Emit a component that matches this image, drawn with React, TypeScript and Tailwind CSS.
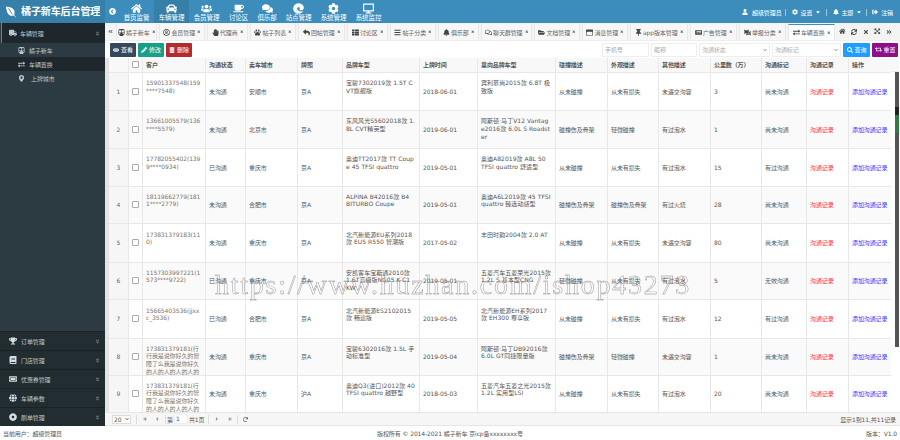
import type { ReactNode } from "react";
import {
  FaAngleDoubleDown,
  FaAngleDoubleLeft,
  FaAngleDoubleRight,
  FaAngleDoubleUp,
  FaBars,
  FaBell,
  FaBook,
  FaCaretDown,
  FaCaretLeft,
  FaCaretRight,
  FaChevronCircleLeft,
  FaChevronDown,
  FaCoffee,
  FaCog,
  FaComments,
  FaDotCircle,
  FaEdge,
  FaDesktop,
  FaEnvira,
  FaExchangeAlt,
  FaExpandArrowsAlt,
  FaEye,
  FaFolderOpen,
  FaGlobe,
  FaHandPaper,
  FaHome,
  FaMapMarkerAlt,
  FaNewspaper,
  FaObjectUngroup,
  FaPaw,
  FaPencilAlt,
  FaRedo,
  FaRegComments,
  FaRegUserCircle,
  FaRegWindowMaximize,
  FaReply,
  FaRetweet,
  FaSearch,
  FaSignOutAlt,
  FaStepBackward,
  FaStepForward,
  FaSubway,
  FaSync,
  FaThList,
  FaThumbtack,
  FaTicketAlt,
  FaTimes,
  FaTrashAlt,
  FaTrophy,
  FaTruck,
  FaUser,
  FaUsers,
  FaCar,
} from "react-icons/fa";

const navItems = [
  { label: "首页监管", icon: <FaHome size={11} />, width: "w-[35px]" },
  { label: "车辆管理", icon: <FaCar size={11} />, width: "w-[35px]", active: true },
  { label: "会员管理", icon: <FaUsers size={11} />, width: "w-[35px]" },
  { label: "讨论区", icon: <FaCoffee size={11} />, width: "w-[29px]" },
  { label: "俱乐部", icon: <FaComments size={11} />, width: "w-[28px]" },
  { label: "站点管理", icon: <FaEdge size={11} />, width: "w-[35px]" },
  { label: "系统管理", icon: <FaCog size={11} />, width: "w-[35px]" },
  { label: "系统监控", icon: <FaDesktop size={11} />, width: "w-[35px]" },
];

const tabs = [
  { label: "橘子新车", icon: <FaSubway />, width: "w-[41px]" },
  { label: "会员管理", icon: <FaRegUserCircle />, width: "w-[46px]" },
  { label: "代理商", icon: <FaHandPaper />, width: "w-[41px]" },
  { label: "帖子列表", icon: <FaPaw />, width: "w-[46px]" },
  { label: "回帖管理", icon: <FaReply />, width: "w-[47px]" },
  { label: "讨论区", icon: <FaThList />, width: "w-[41px]" },
  { label: "帖子分类", icon: <FaBars />, width: "w-[46px]" },
  { label: "俱乐部", icon: <FaBell />, width: "w-[41px]" },
  { label: "聊天群管理", icon: <FaRegComments />, width: "w-[51px]" },
  { label: "文档管理", icon: <FaFolderOpen />, width: "w-[46px]" },
  { label: "消息管理", icon: <FaRegWindowMaximize />, width: "w-[46px]" },
  { label: "app版本管理", icon: <FaThumbtack />, width: "w-[58px]" },
  { label: "广告管理", icon: <FaNewspaper />, width: "w-[47px]" },
  { label: "举报分类", icon: <FaObjectUngroup />, width: "w-[47px]" },
  { label: "车辆置换", icon: <FaExchangeAlt />, width: "w-[47px]", active: true },
];

const bottomMenus = [
  { label: "订单管理", icon: <FaTrophy /> },
  { label: "门店管理", icon: <FaBook /> },
  { label: "优惠券管理", icon: <FaTicketAlt /> },
  { label: "车辆参数", icon: <FaGlobe /> },
  { label: "刷单管理", icon: <FaDotCircle /> },
];

const columns = [
  { label: "", width: "w-[19px]" },
  { label: "", width: "w-[14px]" },
  { label: "客户", width: "w-[63px]" },
  { label: "沟通状态", width: "w-[40px]" },
  { label: "卖车城市", width: "w-[52px]" },
  { label: "牌照", width: "w-[45px]" },
  { label: "品牌车型", width: "w-[77px]" },
  { label: "上牌时间", width: "w-[58px]" },
  { label: "意向品牌车型", width: "w-[78px]" },
  { label: "碰撞描述", width: "w-[52px]" },
  { label: "外观描述", width: "w-[51px]" },
  { label: "其他描述", width: "w-[52px]" },
  { label: "公里数（万）", width: "w-[51px]" },
  { label: "沟通标记", width: "w-[45px]" },
  { label: "沟通记录", width: "w-[42px]" },
  { label: "操作", width: "w-[43px]" },
];

const longName = "173831379181(行行我是说你好久的智障了么我是说你好久的人的人的人的人的";

const rows = [
  { h: "h-[38px]", customer: "15901337548(159****7548)", status: "未沟通", city: "安顺市", plate: "京A", car: "宝骏7302019款 1.5T CVT旗舰版", date: "2018-06-01", want: "宾利慕尚2015款 6.8T 极致版", crash: "从未碰撞", look: "从未有损失", other: "未遇交沟容", km: "3", mark: "尚未沟通" },
  { h: "h-[38px]", customer: "13661005579(136****5579)", status: "未沟通", city: "北京市", plate: "京A", car: "东风风光S5602018款 1.8L CVT精英型", date: "2019-06-01", want: "阿斯顿·马丁V12 Vantage2016款 6.0L S Roadster", crash: "碰撞伤及骨架", look: "轻微碰撞", other: "有过泡水", km: "1", mark: "尚未沟通" },
  { h: "h-[38px]", customer: "17782055402(1399****0934)", status: "已沟通", city: "重庆市", plate: "京A", car: "奥迪TT2017款 TT Coupe 45 TFSI quattro", date: "2019-05-01", want: "奥迪A82019款 A8L 50 TFSI quattro 舒适型", crash: "从未碰撞", look: "从未有损失", other: "有过泡水", km: "15", mark: "有过沟通" },
  { h: "h-[37px]", customer: "18119662779(1811****2779)", status: "未沟通", city: "合肥市", plate: "京A", car: "ALPINA B42016款 B4 BITURBO Coupe", date: "2019-05-01", want: "奥迪A6L2019款 45 TFSI quattro 臻选动感型", crash: "碰撞伤及骨架", look: "碰撞伤及骨架", other: "有过火烧", km: "28", mark: "尚未沟通" },
  { h: "h-[39px]", customer: "173831379183(110)", status: "未沟通", city: "重庆市", plate: "京A", car: "北汽新能源EU系列2018款 EU5 R550 智潮版", date: "2017-05-02", want: "丰田时韵2004款 2.0 AT", crash: "从未碰撞", look: "从未有损失", other: "未遇交沟容", km: "80", mark: "尚未沟通" },
  { h: "h-[37px]", customer: "1157303997221(1573****9722)", status: "已沟通", city: "重庆市", plate: "京A", car: "安凯客车宝斯通2010款 1.6T高级版NG05 K-C1 KW", date: "2019-05-01", want: "五菱汽车五菱荣光2015款 1.2L S 基本型CNG", crash: "轻微碰撞", look: "从未有损失", other: "有过泡水", km: "5", mark: "无效沟通" },
  { h: "h-[39px]", customer: "15665403536(jjxxc_3536)", status: "已沟通", city: "合肥市", plate: "京A", car: "北汽新能源ES2102015款 畅途版", date: "2019-05-05", want: "北汽新能源EH系列2017款 EH300 尊享版", crash: "从未碰撞", look: "从未有损失", other: "有过泡水", km: "12", mark: "有过沟通" },
  { h: "h-[37px]", customer: longName, status: "未沟通", city: "重庆市", plate: "京A", car: "宝骏6302016款 1.5L 手动标准型", date: "2019-05-04", want: "阿斯顿·马丁DB92016款 6.0L GT同捷限量版", crash: "碰撞伤及骨架", look: "轻微碰撞", other: "未遇交沟容", km: "1", mark: "尚未沟通" },
  { h: "h-[37px]", customer: longName, status: "未沟通", city: "重庆市", plate: "沪A", car: "奥迪Q3(进口)2012款 40 TFSI quattro 越野型", date: "2018-05-03", want: "五菱汽车五菱之光2015款 1.2L 实用型LSI", crash: "从未碰撞", look: "从未有损失", other: "有过泡水", km: "20", mark: "尚未沟通" },
];

const Cell = ({ children, className = "" }: { children: ReactNode; className?: string }) => (
  <td className={`border-r border-b border-[#e8e8e8] px-[3.5px] py-0 align-middle overflow-hidden ${className}`}>
    {children}
  </td>
);

const Block = ({ children, className = "" }: { children: ReactNode; className?: string }) => (
  <div className={`h-[24px] leading-[7.8px] break-all ${className}`}>{children}</div>
);

const Check = () => <div className="mx-auto size-[7px] rounded-[1px] border border-[#aaa] bg-white" />;

const Sep = ({ className }: { className: string }) => <span className={`w-px h-[7px] bg-[#9cc6de] ${className}`} />;

const ToolButton = ({ icon, label, className }: { icon: ReactNode; label: string; className: string }) => (
  <button className={`h-[14px] flex items-center justify-center gap-[2px] rounded-[1px] text-white ${className}`}>
    {icon}
    <span>{label}</span>
  </button>
);

const Field = ({ text, width, select }: { text: string; width: string; select?: boolean }) => (
  <div className={`h-[14px] flex items-center justify-between bg-white px-[2px] text-[#aaa] border border-[#eee] ${width}`}>
    <span>{text}</span>
    {select && <FaChevronDown className="text-[4px] text-[#888]" />}
  </div>
);

export default function App() {
  return (
    <div className="relative w-[900px] h-[440px] overflow-hidden flex flex-col bg-white text-[6px] tracking-[-0.1px] text-[#555] font-['DejaVu_Sans','Noto_Sans_CJK_SC',sans-serif]">
      {/* header */}
      <div className="h-[23px] flex shrink-0 bg-[#3c8dbc] text-white">
        <div className="w-[105px] flex items-center gap-[4px] pl-[5px] bg-[#367fa9]">
          <FaEnvira size={12} />
          <span className="text-[10px] font-bold leading-none whitespace-nowrap">橘子新车后台管理</span>
        </div>
        <div className="w-[14px] flex items-center justify-center">
          <FaChevronCircleLeft size={7} />
        </div>
        <div className="flex">
          {navItems.map((item) => (
            <div
              key={item.label}
              className={`${item.width} flex flex-col items-center pt-[3px] text-[6.5px] leading-none ${item.active ? "bg-[#367fa9]" : ""}`}
            >
              {item.icon}
              <span className="mt-[1px] whitespace-nowrap">{item.label}</span>
            </div>
          ))}
        </div>
        <div className="ml-auto flex items-center pr-[7px] pt-[1px] whitespace-nowrap">
          <FaUser size={6} />
          <span className="ml-[4px]">超级管理员</span>
          <Sep className="ml-[3px]" />
          <FaCog size={6} className="ml-[6px]" />
          <span className="ml-[3px]">设置</span>
          <FaCaretDown size={6} className="ml-[3px]" />
          <Sep className="ml-[5px]" />
          <FaBell size={6} className="ml-[6px]" />
          <span className="ml-[2px]">主题</span>
          <FaCaretDown size={6} className="ml-[3px]" />
          <Sep className="ml-[4px]" />
          <FaSignOutAlt size={6} className="ml-[5px]" />
          <span className="ml-[3px]">注销</span>
        </div>
      </div>

      <div className="flex flex-1 min-h-0">
        {/* sidebar */}
        <div className="w-[105px] shrink-0 flex flex-col bg-[#2c3b41] text-[#b8c7ce]">
          <div className="h-[20px] flex items-center bg-[#1e282c] border-l border-[#3c8dbc] ml-px pl-[7px] pr-[5px] gap-[3px]">
            <FaTruck size={8} />
            <span>车辆管理</span>
            <FaAngleDoubleUp size={5} className="ml-auto text-[#777]" />
          </div>
          <div className="h-[14px] flex items-center pl-[18px] gap-[4px]">
            <FaSubway size={7} />
            <span>橘子新车</span>
          </div>
          <div className="h-[14px] flex items-center pl-[18px] gap-[4px] bg-[#1e282c]">
            <FaExchangeAlt size={7} />
            <span>车辆置换</span>
          </div>
          <div className="h-[14px] flex items-center pl-[18px] gap-[6px]">
            <FaMapMarkerAlt size={7} />
            <span>上牌城市</span>
          </div>
          <div className="mt-auto flex flex-col bg-[#222d32]">
            {bottomMenus.map((menu) => (
              <div key={menu.label} className="h-[19px] flex items-center gap-[4px] pl-[9px] pr-[5px] border-t border-[#1a2226]">
                <span className="text-[8px] text-[#d5dde0]">{menu.icon}</span>
                <span>{menu.label}</span>
                <FaAngleDoubleDown size={5} className="ml-auto text-[#777]" />
              </div>
            ))}
          </div>
        </div>

        {/* main */}
        <div className="flex-1 min-w-0 flex flex-col">
          {/* tabs */}
          <div className="h-[18px] shrink-0 flex items-end bg-[#f4f4f4] border-b border-[#eee]">
            <div className="w-[11px] h-full flex items-center justify-center text-[#666]">
              <FaAngleDoubleLeft size={5} />
            </div>
            <div className="flex gap-[2px]">
              {tabs.map((tab) => (
                <div
                  key={tab.label}
                  className={`${tab.width} h-[16px] flex items-center justify-center gap-[1px] whitespace-nowrap border-x border-[#e8e8e8] text-[#666] ${
                    tab.active ? "bg-white border-t border-t-[#3c8dbc]" : "bg-[#f7f7f7]"
                  }`}
                >
                  <span className="text-[7px] text-[#444]">{tab.icon}</span>
                  <span>{tab.label}</span>
                  <FaTimes className="ml-[1px] text-[3.5px] text-[#555]" />
                </div>
              ))}
            </div>
            <div className="flex-1 h-full flex items-center gap-[5.5px] pl-[4px] text-[#444]">
              <FaHome size={6.5} />
              <FaSync size={6} />
              <FaTimes size={6} />
              <FaExpandArrowsAlt size={6.5} />
              <FaAngleDoubleRight size={6} />
            </div>
          </div>

          {/* toolbar */}
          <div className="h-[17px] shrink-0 flex items-center pl-[5px] pr-[2px] gap-[2px]">
            <ToolButton icon={<FaEye size={6} />} label="查看" className="w-[26px] bg-[#34495e]" />
            <ToolButton icon={<FaPencilAlt size={6} />} label="修改" className="w-[26px] bg-[#16a085]" />
            <ToolButton icon={<FaTrashAlt size={6} />} label="删除" className="w-[26px] bg-[#b52a2f]" />
            <div className="ml-auto flex items-center gap-[2px]">
              <Field text="手机号" width="w-[47px]" />
              <Field text="昵称" width="w-[46px]" />
              <Field text="沟通状态" width="w-[71px]" select />
              <Field text="沟通标记" width="w-[69px]" select />
              <ToolButton icon={<FaSearch size={6} />} label="查询" className="w-[27px] bg-[#1e9fff]" />
              <ToolButton icon={<FaRetweet size={7} />} label="重置" className="w-[26px] bg-[#8e0e8e]" />
            </div>
          </div>

          {/* table */}
          <div className="flex-1 min-h-0 flex bg-white overflow-hidden">
            <div className="w-[4px] shrink-0 bg-[#e4e4e4]" />
            <div className="w-[782px] shrink-0 overflow-hidden">
              <table className="w-[782px] table-fixed border-collapse">
                <colgroup>
                  {columns.map((col, i) => (
                    <col key={i} className={col.width} />
                  ))}
                </colgroup>
                <thead>
                  <tr className="h-[14px] bg-[#f8f8f8]">
                    {columns.map((col, i) => (
                      <th
                        key={i}
                        className="border-r border-b border-[#e8e8e8] px-[3.5px] py-0 text-left font-bold text-[#555] whitespace-nowrap overflow-hidden"
                      >
                        {i === 1 ? <Check /> : col.label}
                      </th>
                    ))}
                  </tr>
                </thead>
                <tbody>
                  {rows.map((row, i) => (
                    <tr key={i} className={`${row.h} ${i % 2 === 1 ? "bg-[#fafafa]" : "bg-white"}`}>
                      <Cell className="bg-[#f6f6f6] text-center text-[#666]">{i + 1}</Cell>
                      <Cell className="px-0">
                        <Check />
                      </Cell>
                      <Cell className="text-[#7d766a]">
                        <Block>{row.customer}</Block>
                      </Cell>
                      <Cell>{row.status}</Cell>
                      <Cell>{row.city}</Cell>
                      <Cell>{row.plate}</Cell>
                      <Cell>
                        <Block className="tracking-[0.05px]">{row.car}</Block>
                      </Cell>
                      <Cell>{row.date}</Cell>
                      <Cell>
                        <Block className="tracking-[0.05px]">{row.want}</Block>
                      </Cell>
                      <Cell className="whitespace-nowrap">{row.crash}</Cell>
                      <Cell className="whitespace-nowrap">{row.look}</Cell>
                      <Cell className="whitespace-nowrap">{row.other}</Cell>
                      <Cell>{row.km}</Cell>
                      <Cell className="whitespace-nowrap">{row.mark}</Cell>
                      <Cell className="text-[#ff2244] whitespace-nowrap">沟通记录</Cell>
                      <Cell className="text-[#3333ff] whitespace-nowrap">添加沟通记录</Cell>
                    </tr>
                  ))}
                </tbody>
              </table>
            </div>
            <div className="w-[4px] shrink-0 flex flex-col">
              <div className="h-[14px] bg-[#f8f8f8] border-b border-[#e8e8e8]" />
            </div>
            {/* scrollbar */}
            <div className="w-[4px] shrink-0 flex flex-col">
              <div className="h-[14px] bg-[#f8f8f8] border-b border-[#e8e8e8]" />
              <div className="h-[35px] bg-[#555]" />
              <div className="h-[8px] bg-[#222]" />
              <div className="h-[18px] bg-[#2e7d3e]" />
              <div className="h-[214px] bg-[#555]" />
            </div>
            <div className="w-[1px] shrink-0" />
          </div>

          {/* pager */}
          <div className="h-[14px] shrink-0 flex items-center bg-[#f6f6f6] border-t border-b border-[#e6e6e6] pl-[7px] pr-[4px] text-[#555] whitespace-nowrap">
            <div className="w-[19px] h-[9px] flex items-center justify-between bg-white border border-[#ddd] px-[1px]">
              <span>20</span>
              <FaChevronDown className="text-[4px]" />
            </div>
            <span className="ml-[5px] h-[9px] w-px bg-[#ddd]" />
            <FaStepBackward className="ml-[6px] text-[4px] text-[#999]" />
            <FaCaretLeft className="ml-[7px] text-[6px] text-[#999]" />
            <span className="ml-[5px] h-[9px] w-px bg-[#ddd]" />
            <span className="ml-[1px]">第</span>
            <div className="ml-[1px] w-[14px] h-[10px] bg-white border border-[#eee] pl-[1px] leading-[8px]">1</div>
            <span className="ml-[1px]">共1页</span>
            <span className="ml-[4px] h-[9px] w-px bg-[#ddd]" />
            <FaCaretRight className="ml-[5px] text-[6px] text-[#999]" />
            <FaStepForward className="ml-[8px] text-[4px] text-[#999]" />
            <span className="ml-[5px] h-[9px] w-px bg-[#ddd]" />
            <FaRedo className="ml-[5px] text-[5px] text-[#666]" />
            <span className="ml-auto">显示1到11,共11记录</span>
          </div>
        </div>
      </div>

      {/* footer */}
      <div className="h-[14px] shrink-0 flex items-center px-[3px] text-[#555] bg-white whitespace-nowrap">
        <span className="flex-1">当前用户：超级管理员</span>
        <span>版权所有 © 2014-2021 橘子新车 京icp备xxxxxxxx号</span>
        <span className="flex-1 text-right">版本：V1.0</span>
      </div>

      {/* watermark */}
      <div className="absolute left-[215px] top-[265px] pointer-events-none grayscale whitespace-nowrap text-[28px] leading-[40px] tracking-[1.75px] text-transparent [-webkit-text-stroke:0.4px_#888] font-['Liberation_Serif',serif]">
        https://www.huzhan.com/ishop43273
      </div>
    </div>
  );
}
